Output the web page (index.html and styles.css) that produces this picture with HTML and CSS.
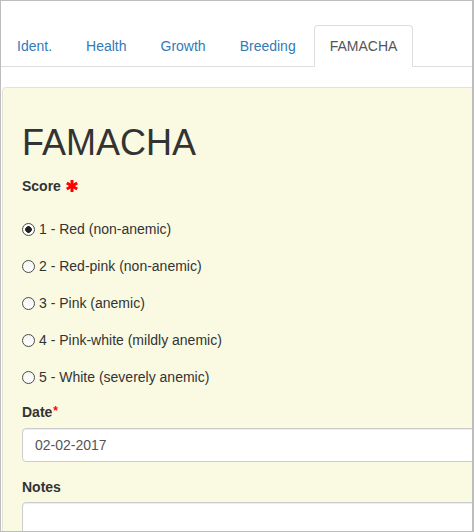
FILE: index.html
```html
<!DOCTYPE html>
<html>
<head>
<meta charset="utf-8">
<link rel="stylesheet" href="styles.css">
</head>
<body>
<div class="frame">
  <ul class="tabs">
    <li class="tab"><a href="#">Ident.</a></li>
    <li class="tab"><a href="#">Health</a></li>
    <li class="tab"><a href="#">Growth</a></li>
    <li class="tab"><a href="#">Breeding</a></li>
    <li class="tab active"><a href="#">FAMACHA</a></li>
  </ul>
  <div class="panel">
    <h1 class="title">FAMACHA</h1>
    <div class="label score-label">Score
      <svg class="req-icon" width="12" height="12" viewBox="0 0 12 12"><g stroke="#f00" stroke-width="3" stroke-linecap="butt"><line x1="6" y1="0" x2="6" y2="12"/><line x1="0.8" y1="3" x2="11.2" y2="9"/><line x1="0.8" y1="9" x2="11.2" y2="3"/></g></svg>
    </div>
    <div class="radios">
      <label class="radio"><input type="radio" name="score" checked> 1 - Red (non-anemic)</label>
      <label class="radio"><input type="radio" name="score"> 2 - Red-pink (non-anemic)</label>
      <label class="radio"><input type="radio" name="score"> 3 - Pink (anemic)</label>
      <label class="radio"><input type="radio" name="score"> 4 - Pink-white (mildly anemic)</label>
      <label class="radio"><input type="radio" name="score"> 5 - White (severely anemic)</label>
    </div>
    <div class="label date-label">Date<span class="star">*</span></div>
    <div class="input">02-02-2017</div>
    <div class="label notes-label">Notes</div>
    <div class="textarea"></div>
  </div>
</div>
</body>
</html>
```
FILE: styles.css
```css
* { box-sizing: border-box; }
html, body { margin: 0; padding: 0; background: #fff; }
body {
  font-family: "Liberation Sans", Arial, sans-serif;
  font-size: 14px;
  line-height: 20px;
  color: #333;
}
.frame {
  width: 474px;
  height: 532px;
  border: 1px solid #bdbdbd;
  border-right-width: 2px;
  overflow: hidden;
  padding-top: 24px;
}
.tabs {
  list-style: none;
  margin: 0;
  padding: 0;
  display: flex;
  border-bottom: 1px solid #ddd;
  width: 600px;
}
.tab {
  margin-right: 2px;
  margin-bottom: -1px;
}
.tab a {
  display: block;
  padding: 10px 15px;
  line-height: 20px;
  border: 1px solid transparent;
  border-radius: 4px 4px 0 0;
  color: #337ab7;
  text-decoration: none;
}
.tab.active a {
  color: #555;
  background: #fff;
  border-color: #ddd #ddd transparent #ddd;
}
.panel {
  margin: 20px 0 0 1px;
  width: 560px;
  height: 500px;
  background: #fafae2;
  border: 1px solid #e2e2d6;
  border-radius: 4px;
  padding: 0 19px;
}
.title {
  margin: 35px 0 13px;
  font-size: 36px;
  line-height: 40px;
  font-weight: normal;
  color: #333;
}
.label {
  font-weight: bold;
  display: flex;
  align-items: center;
}
.req-icon { margin-left: 5px; }
.radios {
  display: flex;
  flex-direction: column;
  gap: 17px;
  margin-top: 23px;
}
.radio {
  display: flex;
  align-items: center;
  height: 20px;
  color: #333;
}
.radio input {
  appearance: none;
  -webkit-appearance: none;
  margin: 0 4px 0 0;
  width: 13px;
  height: 13px;
  border: 1px solid #4a4a4a;
  border-radius: 50%;
  background: linear-gradient(#f4f4f4, #ffffff);
}
.radio input:checked {
  background: radial-gradient(circle, #222 0, #222 3px, #fff 3.6px, #fff 100%);
}
.date-label { margin-top: 15px; }
.star { color: #f00; font-size: 12px; margin-left: 1px; align-self: flex-start; line-height: 18px; }
.input {
  margin-top: 6px;
  height: 34px;
  width: 520px;
  border: 1px solid #ccc;
  border-radius: 4px;
  background: #fff;
  padding: 6px 12px;
  color: #555;
  box-shadow: inset 0 1px 1px rgba(0,0,0,.075);
}
.notes-label { margin-top: 15px; }
.textarea {
  margin-top: 5px;
  height: 80px;
  width: 520px;
  border: 1px solid #ccc;
  border-radius: 4px;
  background: #fff;
  box-shadow: inset 0 1px 1px rgba(0,0,0,.075);
}
```
